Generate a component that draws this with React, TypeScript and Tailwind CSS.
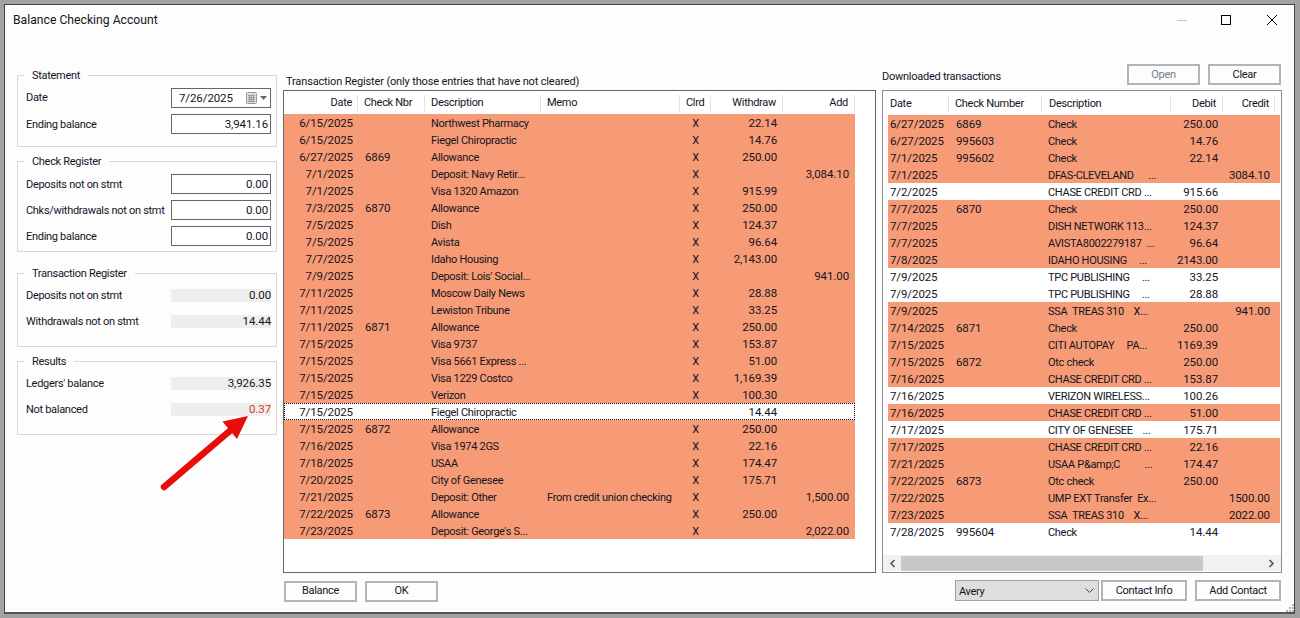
import React from "react";

type L = [string, string, string, string, string, string, string, boolean?];
const left: L[] = [
  ["6/15/2025", "", "Northwest Pharmacy", "", "X", "22.14", ""],
  ["6/15/2025", "", "Fiegel Chiropractic", "", "X", "14.76", ""],
  ["6/27/2025", "6869", "Allowance", "", "X", "250.00", ""],
  ["7/1/2025", "", "Deposit: Navy Retir...", "", "X", "", "3,084.10"],
  ["7/1/2025", "", "Visa 1320 Amazon", "", "X", "915.99", ""],
  ["7/3/2025", "6870", "Allowance", "", "X", "250.00", ""],
  ["7/5/2025", "", "Dish", "", "X", "124.37", ""],
  ["7/5/2025", "", "Avista", "", "X", "96.64", ""],
  ["7/7/2025", "", "Idaho Housing", "", "X", "2,143.00", ""],
  ["7/9/2025", "", "Deposit: Lois' Social...", "", "X", "", "941.00"],
  ["7/11/2025", "", "Moscow Daily News", "", "X", "28.88", ""],
  ["7/11/2025", "", "Lewiston Tribune", "", "X", "33.25", ""],
  ["7/11/2025", "6871", "Allowance", "", "X", "250.00", ""],
  ["7/15/2025", "", "Visa 9737", "", "X", "153.87", ""],
  ["7/15/2025", "", "Visa 5661 Express ...", "", "X", "51.00", ""],
  ["7/15/2025", "", "Visa 1229 Costco", "", "X", "1,169.39", ""],
  ["7/15/2025", "", "Verizon", "", "X", "100.30", ""],
  ["7/15/2025", "", "Fiegel Chiropractic", "", "", "14.44", "", true],
  ["7/15/2025", "6872", "Allowance", "", "X", "250.00", ""],
  ["7/16/2025", "", "Visa 1974 2GS", "", "X", "22.16", ""],
  ["7/18/2025", "", "USAA", "", "X", "174.47", ""],
  ["7/20/2025", "", "City of Genesee", "", "X", "175.71", ""],
  ["7/21/2025", "", "Deposit: Other", "From credit union checking", "X", "", "1,500.00"],
  ["7/22/2025", "6873", "Allowance", "", "X", "250.00", ""],
  ["7/23/2025", "", "Deposit: George's S...", "", "X", "", "2,022.00"],
];

type R = [string, string, string, string, string, boolean];
const right: R[] = [
  ["6/27/2025", "6869", "Check", "250.00", "", true],
  ["6/27/2025", "995603", "Check", "14.76", "", true],
  ["7/1/2025", "995602", "Check", "22.14", "", true],
  ["7/1/2025", "", "DFAS-CLEVELAND      ...", "", "3084.10", true],
  ["7/2/2025", "", "CHASE CREDIT CRD ...", "915.66", "", false],
  ["7/7/2025", "6870", "Check", "250.00", "", true],
  ["7/7/2025", "", "DISH NETWORK 113...", "124.37", "", true],
  ["7/7/2025", "", "AVISTA8002279187  ...", "96.64", "", true],
  ["7/8/2025", "", "IDAHO HOUSING     ...", "2143.00", "", true],
  ["7/9/2025", "", "TPC PUBLISHING     ...", "33.25", "", false],
  ["7/9/2025", "", "TPC PUBLISHING     ...", "28.88", "", false],
  ["7/9/2025", "", "SSA  TREAS 310    X...", "", "941.00", true],
  ["7/14/2025", "6871", "Check", "250.00", "", true],
  ["7/15/2025", "", "CITI AUTOPAY     PA...", "1169.39", "", true],
  ["7/15/2025", "6872", "Otc check", "250.00", "", true],
  ["7/16/2025", "", "CHASE CREDIT CRD ...", "153.87", "", true],
  ["7/16/2025", "", "VERIZON WIRELESS...", "100.26", "", false],
  ["7/16/2025", "", "CHASE CREDIT CRD ...", "51.00", "", true],
  ["7/17/2025", "", "CITY OF GENESEE    ...", "175.71", "", false],
  ["7/17/2025", "", "CHASE CREDIT CRD ...", "22.16", "", true],
  ["7/21/2025", "", "USAA P&amp;C          ...", "174.47", "", true],
  ["7/22/2025", "6873", "Otc check", "250.00", "", true],
  ["7/22/2025", "", "UMP EXT Transfer  Ex...", "", "1500.00", true],
  ["7/23/2025", "", "SSA  TREAS 310    X...", "", "2022.00", true],
  ["7/28/2025", "995604", "Check", "14.44", "", false],
];

const NUM = "text-[11.5px] tracking-[-0.1px]";

function Box({ title, h, mt, children }: { title: string; h: string; mt: string; children: React.ReactNode }) {
  return (
    <fieldset className={`border border-[#d8d8d8] pl-[8px] pr-[5px] ${h} ${mt}`}>
      <legend className="-ml-[2px] h-[14px] px-2 leading-[16px]">{title}</legend>
      {children}
    </fieldset>
  );
}

function Input({ label, value }: { label: string; value: string }) {
  return (
    <div className="flex h-[20px] items-center justify-between">
      <span className="whitespace-nowrap pt-[3px]">{label}</span>
      <div className={`flex h-[20px] w-[100px] shrink-0 items-center justify-end border border-[#666] bg-white pr-[2px] pt-[1px] ${NUM}`}>{value}</div>
    </div>
  );
}

function Readout({ label, value, red }: { label: string; value: string; red?: boolean }) {
  return (
    <div className="flex h-[14px] items-center justify-between">
      <span className="whitespace-nowrap pt-[3px]">{label}</span>
      <div className={`flex h-[13px] w-[100px] shrink-0 items-center justify-end bg-[#eeeeee] pt-[2px] ${NUM} ${red ? "text-[#d03a10]" : ""}`}>{value}</div>
    </div>
  );
}

function Btn({ children, w, dim, low }: { children: React.ReactNode; w: string; dim?: boolean; low?: boolean }) {
  return (
    <button className={`flex h-[21px] ${w} items-center justify-center border-2 border-[#b4b4b4] bg-[#fdfdfd] ${low ? "pt-[2px]" : ""} ${dim ? "text-[#6f7f8f]" : ""}`}>
      {children}
    </button>
  );
}

const HeadSep = "border-r border-[#e2e2e2]";

export default function App() {
  return (
    <div className="relative h-[618px] w-[1300px] overflow-hidden bg-[#a2a2a2] p-[4px] pr-[5px] pb-[4px] font-['Roboto',sans-serif] text-[11px] tracking-[-0.3px] text-[#14141e]">
      <div className="relative flex h-[610px] flex-col border border-b-2 border-[#3c4650] border-b-[#555] bg-[#fdfdfd]">
        {/* title bar */}
        <div className="flex h-[30px] shrink-0 items-center justify-between pl-[8px]">
          <span className="text-[12.2px] tracking-[0px]">Balance Checking Account</span>
          <div className="flex items-center pr-[17px]">
            <div className="mr-[34px] h-px w-[10px] bg-[#c8c8c8]" />
            <div className="mr-[36px] h-[10px] w-[10px] border border-black" />
            <svg width="10" height="10" viewBox="0 0 10 10" className="stroke-black">
              <path d="M0 0 L10 10 M10 0 L0 10" strokeWidth="1" fill="none" />
            </svg>
          </div>
        </div>

        {/* main */}
        <div className="flex flex-1 pl-[12px] pr-[12px]">
          {/* left column */}
          <div className="mt-[33px] w-[260px] shrink-0">
            <Box title="Statement" h="h-[79px]" mt="mt-0">
              <div className="flex flex-col gap-[6px] pt-[6px]">
                <div className="flex h-[20px] items-center justify-between">
                  <span>Date</span>
                  <div className={`flex h-[20px] w-[100px] items-center justify-between border border-[#666] bg-white pl-[7px] pr-[3px] ${NUM}`}>
                    <span className="pt-[2px]">7/26/2025</span>
                    <div className="flex items-center gap-[3px]">
                      <svg width="11" height="12" viewBox="0 0 11 12">
                        <rect x="0.5" y="0.5" width="10" height="11" rx="1" fill="#dcdcdc" stroke="#9a9a9a" />
                        <path d="M2 3.5H9M2 5.5H9M2 7.5H9M2 9.5H9M3.5 3V10M5.5 3V10M7.5 3V10" stroke="#8a8a8a" strokeWidth="0.7" />
                      </svg>
                      <svg width="7" height="4" viewBox="0 0 7 4"><path d="M0 0H7L3.5 4Z" fill="#666" /></svg>
                    </div>
                  </div>
                </div>
                <Input label="Ending balance" value="3,941.16" />
              </div>
            </Box>
            <Box title="Check Register" h="h-[98px]" mt="mt-[7px]">
              <div className="flex flex-col gap-[6px] pt-[6px]">
                <Input label="Deposits not on stmt" value="0.00" />
                <Input label="Chks/withdrawals not on stmt" value="0.00" />
                <Input label="Ending balance" value="0.00" />
              </div>
            </Box>
            <Box title="Transaction Register" h="h-[81px]" mt="mt-[14px]">
              <div className="flex flex-col gap-[12px] pt-[8px]">
                <Readout label="Deposits not on stmt" value="0.00" />
                <Readout label="Withdrawals not on stmt" value="14.44" />
              </div>
            </Box>
            <Box title="Results" h="h-[81px]" mt="mt-[7px]">
              <div className="flex flex-col gap-[12px] pt-[8px]">
                <Readout label="Ledgers' balance" value="3,926.35" />
                <Readout label="Not balanced" value="0.37" red />
              </div>
            </Box>
          </div>

          {/* center column */}
          <div className="ml-[6px] flex w-[593px] shrink-0 flex-col">
            <div className="mt-[38px] h-[17px] pl-[3px] leading-[17px] tracking-[-0.15px]">Transaction Register (only those entries that have not cleared)</div>
            <div className="h-[483px] border border-[#666] bg-white">
              <div className="flex h-[23px] items-center pt-[2px]">
                <div className={`w-[74px] pr-[5px] text-right ${HeadSep}`}>Date</div>
                <div className={`w-[67px] pl-[6px] ${HeadSep}`}>Check Nbr</div>
                <div className={`w-[116px] pl-[6px] ${HeadSep}`}>Description</div>
                <div className={`w-[139px] pl-[6px] ${HeadSep}`}>Memo</div>
                <div className={`w-[31px] pl-[6px] ${HeadSep}`}>Clrd</div>
                <div className={`w-[72px] pr-[6px] text-right ${HeadSep}`}>Withdraw</div>
                <div className={`w-[72px] pr-[6px] text-right ${HeadSep}`}>Add</div>
              </div>
              {left.map((r, i) => (
                <div
                  key={i}
                  className={`flex h-[17px] w-[571px] items-baseline whitespace-nowrap leading-[18px] ${
                    r[7] ? "bg-white outline-1 -outline-offset-1 outline-dotted outline-black" : "bg-[#f69b76]"
                  }`}
                >
                  <div className={`w-[74px] pr-[5px] text-right ${NUM}`}>{r[0]}</div>
                  <div className={`w-[67px] pl-[7px] ${NUM}`}>{r[1]}</div>
                  <div className="w-[116px] pl-[6px]">{r[2]}</div>
                  <div className="w-[139px] pl-[6px]">{r[3]}</div>
                  <div className="w-[31px] text-center">{r[4]}</div>
                  <div className={`w-[72px] pr-[6px] text-right ${NUM}`}>{r[5]}</div>
                  <div className={`w-[72px] pr-[6px] text-right ${NUM}`}>{r[6]}</div>
                </div>
              ))}
            </div>
            <div className="mt-[8px] flex gap-[8px] pl-[1px]">
              <Btn w="w-[73px]">Balance</Btn>
              <Btn w="w-[73px]">OK</Btn>
            </div>
          </div>

          {/* right column */}
          <div className="ml-[6px] flex w-[400px] shrink-0 flex-col">
            <div className="mt-[29px] flex h-[26px] items-start justify-between">
              <span className="mt-[5px] tracking-[-0.25px]">Downloaded transactions</span>
              <div className="mr-[1px] flex gap-[8px]">
                <Btn w="w-[73px]" dim low>Open</Btn>
                <Btn w="w-[73px]" low>Clear</Btn>
              </div>
            </div>
            <div className="flex h-[483px] flex-col border border-[#8c8c8c] bg-white pl-[5px] pr-[1px]">
              <div className="flex h-[24px] shrink-0 items-center pt-[2px]">
                <div className={`w-[61px] pl-[2px] ${HeadSep}`}>Date</div>
                <div className={`w-[93px] pl-[6px] ${HeadSep}`}>Check Number</div>
                <div className={`w-[129px] pl-[7px] ${HeadSep}`}>Description</div>
                <div className={`w-[52px] pr-[6px] text-right ${HeadSep}`}>Debit</div>
                <div className={`w-[52px] pr-[5px] text-right ${HeadSep}`}>Credit</div>
              </div>
              {right.map((r, i) => (
                <div key={i} className={`flex h-[17px] shrink-0 items-baseline whitespace-pre leading-[18px] ${r[5] ? "bg-[#f69b76]" : "bg-white"}`}>
                  <div className={`w-[61px] pl-[2px] ${NUM}`}>{r[0]}</div>
                  <div className={`w-[93px] pl-[7px] ${NUM}`}>{r[1]}</div>
                  <div className="w-[129px] pl-[6px]">{r[2]}</div>
                  <div className={`w-[52px] pr-[5px] text-right ${NUM}`}>{r[3]}</div>
                  <div className={`w-[52px] pr-[5px] text-right ${NUM}`}>{r[4]}</div>
                </div>
              ))}
              <div className="-ml-[5px] -mr-[1px] mt-[15px] flex h-[16px] items-center bg-[#f1f1f1] px-[1px]">
                <div className="flex w-[17px] justify-center">
                  <svg width="7" height="9" viewBox="0 0 7 9"><path d="M5.5 1L2 4.5L5.5 8" stroke="#555" strokeWidth="1.6" fill="none" /></svg>
                </div>
                <div className="h-[15px] w-[302px] bg-[#c8c8c8]" />
                <div className="ml-auto flex w-[17px] justify-center">
                  <svg width="7" height="9" viewBox="0 0 7 9"><path d="M1.5 1L5 4.5L1.5 8" stroke="#555" strokeWidth="1.6" fill="none" /></svg>
                </div>
              </div>
            </div>
            <div className="mt-[7px] flex">
              <div className="ml-[73px] flex h-[21px] w-[144px] items-center justify-between border border-[#a0a0a0] bg-[#dedede] pl-[3px] pr-[4px]">
                <span className="pt-[3px]">Avery</span>
                <svg width="9" height="5" viewBox="0 0 9 5"><path d="M0.5 0.5L4.5 4.5L8.5 0.5" stroke="#444" fill="none" /></svg>
              </div>
              <div className="ml-[2px]"><Btn w="w-[86px]" low>Contact Info</Btn></div>
              <div className="ml-[8px]"><Btn w="w-[86px]" low>Add Contact</Btn></div>
            </div>
          </div>
        </div>

        {/* resize grip */}
        <svg width="9" height="9" viewBox="0 0 9 9" className="absolute bottom-0 right-0 fill-[#b5b5b5]">
          <rect x="7" y="1" width="2" height="2" />
          <rect x="4" y="4" width="2" height="2" />
          <rect x="7" y="4" width="2" height="2" />
          <rect x="1" y="7" width="2" height="2" />
          <rect x="4" y="7" width="2" height="2" />
          <rect x="7" y="7" width="2" height="2" />
        </svg>
      </div>

      {/* annotation arrow */}
      <svg width="1300" height="618" viewBox="0 0 1300 618" className="pointer-events-none absolute left-0 top-0">
        <path d="M164 487 L232 429" stroke="#e80c0a" strokeWidth="6.5" strokeLinecap="round" fill="none" />
        <path d="M248 416 L222.5 421.5 L237 439 Z" fill="#e80c0a" />
      </svg>
    </div>
  );
}
